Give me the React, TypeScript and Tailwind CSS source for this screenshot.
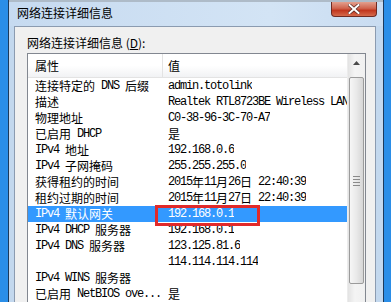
import React from "react";

const rows: [string, string][] = [
  ["连接特定的 DNS 后缀", "admin.totolink"],
  ["描述", "Realtek RTL8723BE Wireless LAN"],
  ["物理地址", "C0-38-96-3C-70-A7"],
  ["已启用 DHCP", "是"],
  ["IPv4 地址", "192.168.0.6"],
  ["IPv4 子网掩码", "255.255.255.0"],
  ["获得租约的时间", "2015年11月26日 22:40:39"],
  ["租约过期的时间", "2015年11月27日 22:40:39"],
  ["IPv4 默认网关", "192.168.0.1"],
  ["IPv4 DHCP 服务器", "192.168.0.1"],
  ["IPv4 DNS 服务器", "123.125.81.6"],
  ["", "114.114.114.114"],
  ["IPv4 WINS 服务器", ""],
  ["已启用 NetBIOS ove...", "是"],
];

// ascii runs get a half-width mono, cjk runs full width
const Mixed = ({ text }: { text: string }) => {
  const parts = text.split(/([\x20-\x7e]+)/).filter(Boolean);
  return (
    <>
      {parts.map((p, i) =>
        /^[\x20-\x7e]+$/.test(p) ? (
          <span
            key={i}
            className="inline-block h-[16px] leading-[16px] align-top font-['Liberation_Mono',monospace] text-[12px] tracking-[-1.2px] whitespace-pre"
          >
            {p}
          </span>
        ) : (
          <span
            key={i}
            className="inline-block h-[16px] leading-[16px] align-top font-['Noto_Sans_CJK_SC',sans-serif] text-[12px]"
          >
            {p}
          </span>
        )
      )}
    </>
  );
};

const ScrollBar = () => (
  <div className="w-[18px] shrink-0 flex flex-col bg-[linear-gradient(90deg,#e3e3e3,#f4f4f4_40%,#f0f0f0)] border-l border-[#ececec]">
    <div className="h-[17px] flex items-center justify-center">
      <svg width="7" height="4" viewBox="0 0 7 4">
        <path d="M3.5 0 L7 4 L0 4 Z" fill="#4a4a4a" />
      </svg>
    </div>
    <div className="mt-[6px] mx-[1px] h-[207px] rounded-[2px] border border-[#9b9b9b] bg-[linear-gradient(90deg,#f6f6f6,#e9e9e9_50%,#d6d6d6)] flex flex-col items-center justify-center gap-[2px]">
      <div className="w-[7px] h-px bg-[#8a8a8a]" />
      <div className="w-[7px] h-px bg-[#8a8a8a]" />
      <div className="w-[7px] h-px bg-[#8a8a8a]" />
      <div className="w-[7px] h-px bg-[#8a8a8a]" />
    </div>
  </div>
);

const App = () => {
  return (
    <div className="w-[391px] h-[302px] overflow-hidden flex bg-[#2a8ee8]">
      <div className="w-[8px] shrink-0" />
      <div className="w-px shrink-0 bg-[#1c3a5c]" />
      <div className="w-[374px] shrink-0 flex flex-col bg-[#c3d8ee]">
        <div className="h-[2px] bg-[#aebbc8]" />
        <div className="h-[24px] flex items-start justify-between pl-[8px] pr-[6px] bg-[linear-gradient(90deg,#c6daf0,#d3e4f5_70%,#c9dcf1)]">
          <div className="pt-[3px] leading-[16px] text-[12px] text-black font-['Noto_Sans_CJK_SC',sans-serif]">
            网络连接详细信息
          </div>
          <div className="w-[46px] h-[15px] rounded-b-[4px] border border-t-0 border-[#6e2a22] bg-[linear-gradient(180deg,#e2a08f,#d0644e_45%,#c1371f_60%,#d56a4c)] flex items-center justify-center">
            <svg width="12" height="10" viewBox="0 0 12 10">
              <path d="M1.5 1 L10.5 9 M10.5 1 L1.5 9" stroke="#5a2a24" strokeWidth="3.4" strokeLinecap="square" />
              <path d="M1.5 1 L10.5 9 M10.5 1 L1.5 9" stroke="#ffffff" strokeWidth="2" strokeLinecap="square" />
            </svg>
          </div>
        </div>
        <div className="flex-1 flex pl-[5px]">
          <div className="w-[362px] shrink-0 border border-b-0 border-[#8b9bb0] bg-[#f0f0f0] pl-[12px] pt-[10px] flex flex-col">
            <div className="h-[12px] leading-[12px] text-[12px] text-black font-['Noto_Sans_CJK_SC',sans-serif] mb-[4px]">
              网络连接详细信息 (<span className="underline">D</span>):
            </div>
            <div className="relative w-[339px] flex-1 border border-b-0 border-[#828790] bg-white flex">
              <div className="w-[319px] shrink-0 flex flex-col">
                <div className="h-[24px] shrink-0 flex border-b border-[#e3e3e3] bg-[linear-gradient(180deg,#ffffff,#ffffff_50%,#f1f2f4)] text-[12px] text-black font-['Noto_Sans_CJK_SC',sans-serif] leading-[23px]">
                  <div className="w-[135px] pl-[7px] border-r border-[#e3e3e3]">属性</div>
                  <div className="pl-[5px]">值</div>
                </div>
                {rows.map(([k, v], i) => {
                  const sel = i === 8;
                  return (
                    <div
                      key={i}
                      className={`h-[16px] shrink-0 flex leading-[16px] overflow-hidden whitespace-nowrap ${
                        sel ? "bg-[#3399ff] text-white" : "text-black"
                      }`}
                    >
                      <div className="w-[135px] shrink-0 pl-[7px] overflow-hidden">
                        <Mixed text={k} />
                      </div>
                      <div className="pl-[5px] overflow-hidden">
                        <Mixed text={v} />
                      </div>
                    </div>
                  );
                })}
              </div>
              <ScrollBar />
              <div className="absolute left-[127px] top-[151px] w-[105px] h-[21px] border-[3px] border-[#e12a2a]" />
            </div>
          </div>
        </div>
      </div>
      <div className="w-px shrink-0 bg-[#1c3a5c]" />
      <div className="w-[7px] shrink-0" />
    </div>
  );
};

export default App;
